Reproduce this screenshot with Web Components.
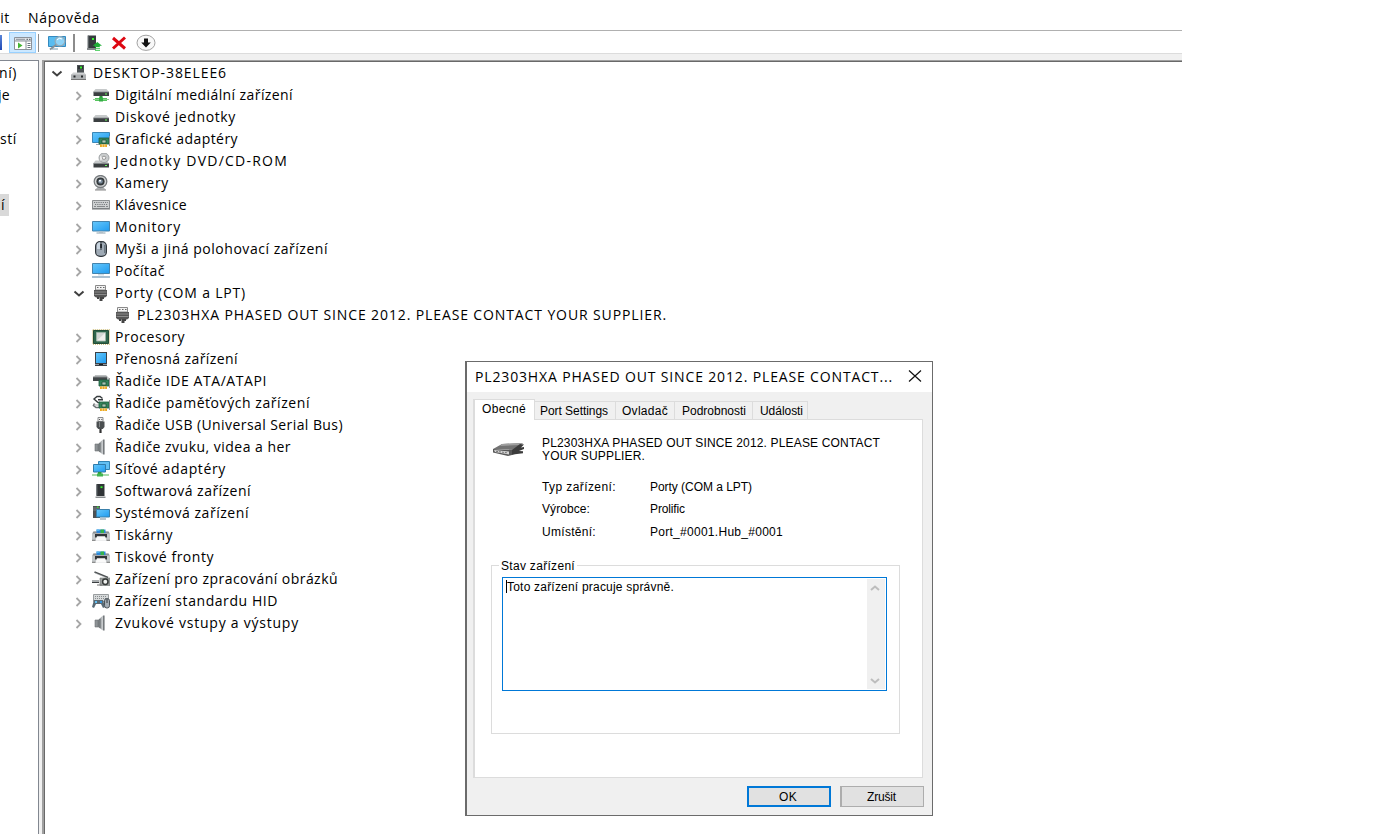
<!DOCTYPE html>
<html lang="cs">
<head>
<meta charset="utf-8">
<title>Správce zařízení</title>
<style>
  body {
    margin: 0;
    height: 834px;
    overflow: hidden;
    background: #fff;
    color: #000;
    font: 14px/22px "Open Sans", "Noto Sans", sans-serif;
  }
</style>
</head>
<body>
<device-manager></device-manager>

<script>
// Small helper: every component renders its markup into an open shadow root
class BaseElement extends HTMLElement {
  render(html) {
    const template = document.createElement('template');
    template.innerHTML = html;
    this.attachShadow({ mode: 'open' });
    this.shadowRoot.appendChild(template.content.cloneNode(true));
  }
}

// components/icons

const port = `
  <path d="M3.5 .5h10v4.5h-10z" fill="#f2f2f2" stroke="#8a8a8a"/>
  <path d="M5 2h1.5v1H5zM8 2h1.5v1H8zM11 2h1.5v1H11z" fill="#666"/>
  <path d="M2 5h13v6l-2 1.5H4L2 11z" fill="#555"/>
  <path d="M2.5 7h12M2.5 9.5h12" stroke="#8b8b8b"/>
  <path d="M5 12h2v2H5zM10 12h2v2h-2zM7.5 12h3v4h-3z" fill="#444"/>`;
const card = `
  <path d="M7 7h10v6H7z" fill="#34845b" stroke="#1d5b3c" stroke-width=".8"/>
  <path d="M10 9h4v3h-4z" fill="#a9c7b5" stroke="#17492f" stroke-width=".7"/>
  <path d="M17.5 5v10" stroke="#999"/>
  <path d="M8 13.4h7V16H8z" fill="#eda921"/><path d="M10.3 13.4V16M12.8 13.4V16" stroke="#fff" stroke-width=".5"/>`;
const drive = y => `
  <path d="M3.5 ${y}h11L17 ${y + 3}H1z" fill="#c6c9ca"/>
  <path d="M1.5 ${y + 3}h15.5v4H1.5z" fill="#3b3f41"/>
  <path d="M1.5 ${y + 3}h15.5" stroke="#83888a" stroke-width=".8"/>
  <path d="M13 ${y + 4.4}h2v1.2h-2z" fill="#6aff5c"/>`;
const speaker = `
  <path d="M3 5h3v7H3z" fill="#8e9396" stroke="#6b7073" stroke-width=".6"/>
  <path d="M6 5l5-4.5v15L6 12z" fill="url(#metal)"/>
  <path d="M11 .5h1.6v15H11z" fill="#75797c"/><path d="M8 4v9" stroke="#565b5e" stroke-width=".7"/>`;
const printer = `
  <path d="M1.5 4.5h15L18 6.5v7H0v-7z" fill="#c3c7c9"/>
  <path d="M1.5 4.5h15l1 2H.5z" fill="#8b9093"/>
  <path d="M4.5 2.5h9v3.5h-9z" fill="#2d86d8"/><path d="M8.5 2.5h3.5V6H8.5z" fill="#35b34a"/>
  <path d="M4.5 2.5h3V4h-3z" fill="#54b7ee"/>
  <path d="M3 7h12v3.5H3z" fill="#323639"/><path d="M5 9.3h8l1.5 4.2h-11z" fill="#fafafa"/>
  <path d="M0 13.3h3.5M14.5 13.3H18" stroke="#777"/>`;

const icons = {
  root: `<path d="M7 0h7v9H7z" fill="#4b5154"/><path d="M8 1h5v3H8z" fill="#2e3335"/>
    <path d="M10 1.5h2v2h-2z" fill="#35f02d"/>
    <path d="M3 7.5h11.5L16 10H1z" fill="#d0d2d3"/><path d="M1 9.5h15v5H1z" fill="#aeb1b3"/>
    <path d="M1 14.5h15" stroke="#777"/><path d="M3.5 10.5h2v2h-2zM11 10.5h2v2h-2z" fill="#25292b"/>`,
  media: drive(2) + `<path d="M7.5 9h3v3h-3z" fill="#2d9c3e"/>
    <path d="M3 11h12v3H3z" fill="#55c45e"/><path d="M1 12.5h16" stroke="#8bd18f"/><path d="M7 10.5h4v4H7z" fill="#35ad45"/>`,
  disk: drive(6),
  display: `<path d="M.5 1.5h17v10H.5z" fill="url(#screen)" stroke="#3b87b7"/><path d="M4 13.5h5" stroke="#9aa8b0"/>` + card,
  dvd: drive(7.5) + `<ellipse cx="12" cy="4.8" rx="5" ry="4.8" fill="#c9cccd" stroke="#8e9294" stroke-width=".8"/>
    <path d="M8 3l3 1.8L8.5 8z" fill="#f3f3f3"/>
    <ellipse cx="12" cy="4.8" rx="1.8" ry="1.6" fill="#f7f7f7" stroke="#888" stroke-width=".8"/>`,
  camera: `<path d="M6 12h5l3 2.8H3z" fill="#adb0b2"/><path d="M3 15h11" stroke="#888"/>
    <ellipse cx="8.5" cy="6.5" rx="6.3" ry="6" fill="#d5d7d8" stroke="#777b7e" stroke-width="1.3"/>
    <ellipse cx="8.5" cy="6.4" rx="4.1" ry="4" fill="#34393c"/><ellipse cx="8.5" cy="6.4" rx="2.3" ry="2.2" fill="#7b8c9c"/>
    <path d="M7 5h2v1.5H7z" fill="#f6f9ff"/>`,
  keyboard: `<path d="M.5 3.5h17v8H.5z" fill="#ced1d2" stroke="#8b8f91"/>
    <path d="M2 5.5h14M3 7.5h13" stroke="#777b7e" stroke-dasharray="1.2 1"/><path d="M2 9.5h2M5 9.5h8M14 9.5h2" stroke="#85898b"/>
    <path d="M0 12h18" stroke="#6e7274"/>`,
  monitor: `<path d="M.5 2.5h17v9.5H.5z" fill="url(#screen)" stroke="#4584ad"/>
    <path d="M7 12.5h4v1H7z" fill="#b5c1c8"/><path d="M4.5 14h9" stroke="#8da0ac"/>`,
  mouse: `<rect x="3.6" y=".6" width="10.8" height="14.8" rx="4.5" fill="#9faab5" stroke="#30363c" stroke-width="1.2"/>
    <path d="M5 4q0-2.5 3-2.8V8H5z" fill="#c9d5e0"/><path d="M9 1v8" stroke="#30363c"/><path d="M8.2 3h1.7v4H8.2z" fill="#1e242a"/>
    <path d="M12.8 4v8" stroke="#56616c"/>`,
  computer: `<path d="M.5 .5h17v10H.5z" fill="url(#screen)" stroke="#4584ad"/>
    <path d="M6 11h6v1.5H6z" fill="#cfdce4"/><path d="M0 14h18" stroke="#8eabc0" stroke-width="1.5"/>`,
  port,
  cpu: `<path d="M.8.8h16.4v14.4H.8z" fill="none" stroke="#c0ad5b" stroke-width="1.2" stroke-dasharray="1 1"/>
    <path d="M1.5 1.5h15v13h-15z" fill="#2f664b"/><path d="M1.5 1.5h15v13h-15z" fill="none" stroke="#234d38"/>
    <path d="M4.5 3.5h9v8.5h-9z" fill="#d3d6d3" stroke="#9bb3a5"/><path d="M5 11.5L13 4v7.5z" fill="#f0f0ec"/>`,
  portable: `<path d="M3 1h12v14H3z" fill="#3c4146"/><path d="M4 2h10v10H4z" fill="url(#screen)"/>
    <path d="M3 13.5h12" stroke="#939aa1"/><path d="M7 13.5h4" stroke="#1c2022"/>`,
  ide: `<path d="M3 2h11l3 3v3H2V5z" fill="#bcbfc0"/><path d="M1 4h14v4H1z" fill="#424749"/><path d="M1 4h14" stroke="#828688"/>` + card,
  storage: `<path d="M10.5 3.5L8 1.5H5L2 4l4 3.5h2M6 4.7h5" fill="none" stroke="#383d3f" stroke-width="1.4"/>
    <path d="M2.5 8.5l-1 2 2.5 2h4" fill="none" stroke="#6b7173" stroke-width="1.6"/><path d="M2 10h5" stroke="#a5a9ab"/>` + card,
  usb: `<path d="M6 .5h5v4H6z" fill="#eee" stroke="#8b8d8e"/><path d="M7 2h1v1H7zM9.3 2h1v1h-1z" fill="#555"/>
    <path d="M4.5 4.5h8V10L10.8 12H6.2L4.5 10z" fill="#4b4f51"/><path d="M7.5 5v5" stroke="#818587"/><path d="M7.4 12h2.2v4H7.4z" fill="#333"/>`,
  speaker,
  network: `<path d="M6.5.5h11v8h-11z" fill="#63c0f3" stroke="#3184b5"/>
    <path d="M1.5 3.5h12V11h-12z" fill="url(#screen)" stroke="#317baa"/><path d="M6 11h3.5v2H6z" fill="#2d9c3e"/>
    <path d="M0 14h17" stroke="#8bd18f" stroke-width="1.5"/><path d="M5 12.5h6v3H5z" fill="#43b551"/>`,
  software: `<path d="M4.5 1h8v12h-8z" fill="#303437"/><path d="M5 1.5v11" stroke="#596064"/>
    <path d="M8.5 3.3h2v1.8h-2z" fill="#37f52e"/><path d="M3.5 13.5h10V15h-10z" fill="#8c9092"/>`,
  system: `<path d="M1 1h7v12H1z" fill="#4c5255"/><path d="M1 3h7M1 5h7" stroke="#91979a" stroke-width=".7"/>
    <path d="M5 1.6h1.6v1.2H5z" fill="#3ceb34"/>
    <path d="M4.5 4.5h13V12h-13z" fill="url(#screen)" stroke="#3b80aa"/><path d="M8 14h6" stroke="#778b98"/>`,
  printer,
  imaging: `<path d="M2.5 1L16 6.5" stroke="#4b4f51" stroke-width="1.6"/><path d="M3 2l12 5" stroke="#b6babb" stroke-width=".5"/>
    <path d="M0 9h7v3H0z" fill="#a9adaf"/><path d="M0 11.5h7" stroke="#3c4042"/>
    <path d="M8 7h10v7.5H8z" fill="#9c9f9e" stroke="#717573" stroke-width=".6"/><path d="M5 14h5" stroke="#777"/>
    <ellipse cx="13.3" cy="10.8" rx="2.7" ry="2.7" fill="#f0f2f0" stroke="#353938" stroke-width="1.5"/>`,
  hid: `<path d="M1.5 1.5h15v7h-15z" fill="#d6d9da" stroke="#999d9f"/><path d="M3 3.5h12M3 5.5h12" stroke="#888c8e" stroke-dasharray="1 1"/>
    <path d="M2 7h9l2 7-2 1-2-4H4l-2 4-2-1z" fill="#596a75"/><path d="M3 8h2v2H3z" fill="#63bff2"/><path d="M8 8h2v2H8z" fill="#3594db"/>
    <rect x="12.5" y="5.5" width="5" height="9.5" rx="2.3" fill="#a4adb5" stroke="#4b5359"/><path d="M15 6v4" stroke="#33393d"/>`
};

class DmIcon extends BaseElement {
  connectedCallback() {
    this.render(`
      <style>
        :host { display: block; width: 18px; height: 16px; flex: none; }
        svg { display: block; }
      </style>
      <svg width="18" height="16" viewBox="0 0 18 16">
        <defs>
          <linearGradient id="screen" x1="0" y1="0" x2="1" y2="1">
            <stop offset="0" stop-color="#67c8fb"/><stop offset="1" stop-color="#1f9bf0"/>
          </linearGradient>
          <linearGradient id="metal">
            <stop offset="0" stop-color="#6c7174"/><stop offset="1" stop-color="#d2d5d7"/>
          </linearGradient>
        </defs>
        ${icons[this.getAttribute('name')]}
      </svg>`);
  }
}
customElements.define('dm-icon', DmIcon);

// A single line of text, tracked so that it takes up the given width
class FitText extends BaseElement {
  connectedCallback() {
    this.render(`
      <style>
        :host { display: block; white-space: nowrap; flex: none; }
        span { display: inline; }
      </style>
      <span><slot></slot></span>`);
    const width = Number(this.getAttribute('width'));
    const span = this.shadowRoot.querySelector('span');
    const natural = span.getBoundingClientRect().width;
    const count = this.textContent.length;
    span.style.letterSpacing = (width - natural) / count + 'px';
  }
}
customElements.define('fit-text', FitText);

// components/tree-row

class TreeRow extends BaseElement {
  connectedCallback() {
    const level = Number(this.getAttribute('level'));
    const state = this.getAttribute('state');
    const arrows = {
      open: '<path d="M1.5 5.5l4.5 4 4.5-4" stroke="#404040" stroke-width="2"/>',
      closed: '<path d="M3.5 4l4 4-4 4" stroke="#a6a6a6" stroke-width="1.8"/>',
      none: ''
    };
    this.render(`
      <style>
        :host { display: flex; align-items: center; height: 22px; padding-left: ${6 + level * 22}px; }
        .arrow { width: 12px; height: 14px; margin-right: 7px; fill: none; }
        dm-icon { margin-right: 5px; }
      </style>
      <svg class="arrow" viewBox="0 0 12 14">${arrows[state]}</svg>
      <dm-icon name="${this.getAttribute('icon')}"></dm-icon>
      <fit-text width="${this.getAttribute('width')}">${this.textContent}</fit-text>`);
  }
}
customElements.define('tree-row', TreeRow);

// level, state, icon, text width, text
const devices = [
  [0, 'open', 'root', 134, 'DESKTOP-38ELEE6'],
  [1, 'closed', 'media', 178, 'Digitální mediální zařízení'],
  [1, 'closed', 'disk', 121, 'Diskové jednotky'],
  [1, 'closed', 'display', 123, 'Grafické adaptéry'],
  [1, 'closed', 'dvd', 173, 'Jednotky DVD/CD-ROM'],
  [1, 'closed', 'camera', 54, 'Kamery'],
  [1, 'closed', 'keyboard', 72, 'Klávesnice'],
  [1, 'closed', 'monitor', 66, 'Monitory'],
  [1, 'closed', 'mouse', 213, 'Myši a jiná polohovací zařízení'],
  [1, 'closed', 'computer', 50, 'Počítač'],
  [1, 'open', 'port', 131, 'Porty (COM a LPT)'],
  [2, 'none', 'port', 530, 'PL2303HXA PHASED OUT SINCE 2012. PLEASE CONTACT YOUR SUPPLIER.'],
  [1, 'closed', 'cpu', 70, 'Procesory'],
  [1, 'closed', 'portable', 123, 'Přenosná zařízení'],
  [1, 'closed', 'ide', 152, 'Řadiče IDE ATA/ATAPI'],
  [1, 'closed', 'storage', 195, 'Řadiče paměťových zařízení'],
  [1, 'closed', 'usb', 228, 'Řadiče USB (Universal Serial Bus)'],
  [1, 'closed', 'speaker', 176, 'Řadiče zvuku, videa a her'],
  [1, 'closed', 'network', 111, 'Síťové adaptéry'],
  [1, 'closed', 'software', 136, 'Softwarová zařízení'],
  [1, 'closed', 'system', 134, 'Systémová zařízení'],
  [1, 'closed', 'printer', 58, 'Tiskárny'],
  [1, 'closed', 'printer', 99, 'Tiskové fronty'],
  [1, 'closed', 'imaging', 223, 'Zařízení pro zpracování obrázků'],
  [1, 'closed', 'hid', 163, 'Zařízení standardu HID'],
  [1, 'closed', 'speaker', 184, 'Zvukové vstupy a výstupy']
];

class DeviceTree extends BaseElement {
  connectedCallback() {
    this.render(`
      <style>
        :host { display: block; }
      </style>
      ${devices.map(([level, state, icon, width, text]) =>
        `<tree-row level="${level}" state="${state}" icon="${icon}" width="${width}">${text}</tree-row>`).join('')}`);
  }
}
customElements.define('device-tree', DeviceTree);

// components/menu-bar

class MenuBar extends BaseElement {
  connectedCallback() {
    this.render(`
      <style>
        :host { display: flex; height: 23px; padding-top: 7px; border-bottom: 1px solid #b0b0b0; }
        .cut { width: 10px; margin-right: 18px; display: flex; justify-content: flex-end; }
      </style>
      <div class="cut"><fit-text width="17">zit</fit-text></div>
      <fit-text width="72">Nápověda</fit-text>`);
  }
}
customElements.define('menu-bar', MenuBar);

// components/tool-bar

class ToolBar extends BaseElement {
  connectedCallback() {
    this.render(`
      <style>
        :host { display: flex; align-items: center; height: 23px; box-sizing: border-box; border-bottom: 1px solid #dcdcdc; padding-top: 1px; }
        svg { display: block; flex: none; }
        .edge { width: 2px; height: 15px; background: linear-gradient(#5a86d8, #1f48b4); margin-right: 7px; }
        .active { width: 27px; height: 21px; box-sizing: border-box; background: #cce8ff; border: 1px solid #99d1ff; padding: 4px 0 0 4px; }
        .separator { width: 1px; height: 18px; background: #8c8c8c; }
      </style>
      <div class="edge"></div>
      <div class="active">
        <svg width="18" height="14" viewBox="0 0 18 14">
          <path d="M.5.5h17v12H.5z" fill="#fff" stroke="#8b929a"/>
          <path d="M1 1h16v3H1z" fill="#dfe3e7"/><path d="M0 4h18" stroke="#8b929a"/>
          <path d="M2 2.3h9" stroke="#8b929a"/><path d="M12.5 2.3h1.5M15 2.3h1.5" stroke="#4f565d"/>
          <path d="M12 4v8.5" stroke="#8b929a"/><path d="M4 5.5l4.5 3-4.5 3z" fill="#43b533"/>
          <path d="M13.5 6.5h3M13.5 8.5h3M13.5 10.5h3" stroke="#68747f"/>
        </svg>
      </div>
      <div class="separator" style="margin: 0 9px 0 2px"></div>
      <svg width="19" height="16" viewBox="0 0 19 16">
        <path d="M.5 1.5h17v10H.5z" fill="#58bcf0" stroke="#3489bf"/>
        <path d="M4 14h6" stroke="#7d9caf"/>
        <path d="M8.5 9.5L2 14.5" stroke="#84919a" stroke-width="2"/>
        <ellipse cx="12" cy="6.2" rx="4.9" ry="4.6" fill="#8fd3f7" stroke="#94a9b6" stroke-width="1.2"/>
        <path d="M9 5q2-3 5-1" fill="none" stroke="#fff"/>
      </svg>
      <div class="separator" style="width: 2px; margin: 0 12px 0 6px"></div>
      <svg width="15" height="16" viewBox="0 0 15 16">
        <path d="M.8.5h8.2v13H.8z" fill="#363b3e"/><path d="M1.2.5v13" stroke="#6c7275"/>
        <path d="M5 3h2v2H5z" fill="#37f52e"/><path d="M0 13h9v2H0z" fill="#85898b"/>
        <path d="M10.3 7l4.7 3.8h-2.2V12H7.8v-1.2H5.7z" fill="#1fae36"/><path d="M8 13.3h5M8 15.3h5" stroke="#39c84e"/>
      </svg>
      <svg width="16" height="14" viewBox="0 0 16 14" style="margin-left: 9px">
        <path d="M2 2l12 10.5M14 1.5L2 12.5" stroke="#dd0712" stroke-width="3"/>
      </svg>
      <svg width="20" height="17" viewBox="0 0 20 17" style="margin-left: 9px">
        <ellipse cx="10" cy="8.8" rx="9" ry="7.6" fill="#f8f8f8" stroke="#a2a2a2"/>
        <path d="M8 4.5h4v4h2.8L10 13.5 5.2 8.5H8z" fill="#111"/>
      </svg>`);
  }
}
customElements.define('tool-bar', ToolBar);

// components/side-pane (scrolled out to the left, only the line ends are seen)

class SidePane extends BaseElement {
  connectedCallback() {
    this.render(`
      <style>
        :host { display: block; width: 38px; height: 780px; flex: none; border: solid #828790; border-width: 1px 1px 0 0; padding-top: 1px; }
        div { display: flex; justify-content: flex-end; height: 22px; }
        .selected { background: #d9d9d9; }
      </style>
      <div style="width: 17px"><fit-text width="18">ní)</fit-text></div>
      <div style="width: 10px"><fit-text width="12">je</fit-text></div>
      <div></div>
      <div style="width: 17px"><fit-text width="17">stí</fit-text></div>
      <div></div>
      <div></div>
      <div class="selected" style="width: 9px"><fit-text width="8">í</fit-text></div>`);
  }
}
customElements.define('side-pane', SidePane);

// components/push-button

class PushButton extends BaseElement {
  connectedCallback() {
    this.render(`
      <style>
        :host { display: block; }
        button {
          display: flex; align-items: center; justify-content: center;
          width: 84px; height: 21px; padding: 1px 2px 0 0; box-sizing: border-box;
          font: inherit; color: inherit; background: #e1e1e1;
          border: 1px solid #adadad; border-left-width: 2px;
        }
        :host([default]) button { border: 2px solid #0078d7; }
      </style>
      <button><slot></slot></button>`);
  }
}
customElements.define('push-button', PushButton);

// components/tab-strip

class TabStrip extends BaseElement {
  connectedCallback() {
    this.render(`
      <style>
        :host { display: flex; align-items: flex-end; height: 20px; }
        div {
          height: 18px; box-sizing: border-box; border: 1px solid #dcdcdc;
          border-width: 1px 1px 0 0; line-height: 19px; background: #f0f0f0;
        }
        .current {
          height: 21px; margin-bottom: -1px; background: #fff; border-left-width: 2px;
          width: 62px; padding-left: 7px; line-height: 18px; position: relative;
        }
      </style>
      <div class="current"><fit-text width="44">Obecné</fit-text></div>
      <div style="width: 81px; padding-left: 5px"><fit-text width="68">Port Settings</fit-text></div>
      <div style="width: 59px; padding-left: 6px"><fit-text width="46">Ovladač</fit-text></div>
      <div style="width: 78px; padding-left: 7px"><fit-text width="64">Podrobnosti</fit-text></div>
      <div style="width: 55px; padding-left: 7px"><fit-text width="43">Události</fit-text></div>`);
  }
}
customElements.define('tab-strip', TabStrip);

// components/group-box

class GroupBox extends BaseElement {
  connectedCallback() {
    this.render(`
      <style>
        :host { display: block; box-sizing: border-box; width: 409px; height: 169px; border: 1px solid #dcdcdc; }
        .label { display: block; width: 78px; height: 14px; line-height: 16px; margin: -8px 0 0 7px; padding-left: 2px; box-sizing: border-box; background: #fff; }
      </style>
      <div class="label"><fit-text width="74">${this.getAttribute('label')}</fit-text></div>
      <slot></slot>`);
  }
}
customElements.define('group-box', GroupBox);

// components/status-field

class StatusField extends BaseElement {
  connectedCallback() {
    this.render(`
      <style>
        :host { display: flex; justify-content: space-between; box-sizing: border-box; width: 385px; height: 114px; margin: 5px 0 0 10px; border: 1px solid #0078d7; padding: 1px 1px 1px 3px; }
        .text { display: flex; height: 13px; margin-top: 1px; border-left: 1px solid #000; line-height: 15px; }
        .scroll { width: 18px; background: #f0f0f0; display: flex; flex-direction: column; justify-content: space-between; align-items: center; padding: 5px 2px 4px 0; box-sizing: border-box; }
        svg { display: block; fill: none; stroke: #bdbdbd; stroke-width: 2; }
      </style>
      <div class="text"><slot></slot></div>
      <div class="scroll">
        <svg width="10" height="8" viewBox="0 0 10 8"><path d="M1 6l4-3.5L9 6"/></svg>
        <svg width="10" height="8" viewBox="0 0 10 8"><path d="M1 2l4 3.5L9 2"/></svg>
      </div>`);
  }
}
customElements.define('status-field', StatusField);

// components/properties-dialog

class PropertiesDialog extends BaseElement {
  connectedCallback() {
    this.render(`
      <style>
        :host {
          display: block; position: absolute; left: 465px; top: 361px;
          width: 468px; height: 455px; box-sizing: border-box;
          border: 1px solid #6b6b6b; border-left-width: 2px; background: #f0f0f0;
        }
        .title { display: flex; height: 30px; line-height: 30px; padding: 0 10px 0 8px; background: #fff; justify-content: space-between; align-items: center; }
        .title svg { margin-top: -2px; flex: none; }
        .body { font: 12px/13px "Liberation Sans", Arial, sans-serif; padding: 7px 8px 0 6px; }
        .page { height: 359px; box-sizing: border-box; border: 1px solid #dcdcdc; border-left-width: 2px; background: #fff; padding: 16px 0 0 16px; width: 450px; }
        .device { display: flex; gap: 17px; padding-left: 1px; }
        .device svg { margin-top: 5px; }
        .name { display: flex; flex-direction: column; padding-top: 1px; }
        .facts { display: grid; grid-template-columns: 108px auto; grid-template-rows: 22px 22px 23px; align-items: center; margin: 13px 0 22px 51px; }
        .facts .last { padding-top: 1px; }
        .buttons { display: flex; justify-content: flex-end; gap: 9px; margin-top: 8px; }
      </style>
      <div class="title">
        <fit-text width="418">PL2303HXA PHASED OUT SINCE 2012. PLEASE CONTACT...</fit-text>
        <svg width="14" height="12" viewBox="0 0 14 12"><path d="M1 .5l12 11M13 .5l-12 11" stroke="#111" stroke-width="1.2"/></svg>
      </div>
      <div class="body">
        <tab-strip></tab-strip>
        <div class="page">
          <div class="device">
            <svg width="33" height="17" viewBox="0 0 33 17">
              <path d="M1 8L10 3l21-1-9 7z" fill="#737373"/>
              <path d="M10 3l21-1-3 2-20 1z" fill="#a0a0a0"/>
              <path d="M1 8l19 1v5l-4 1-15-3.5z" fill="#575757"/>
              <path d="M2 9l15 1.5v3L3 11z" fill="#d5d5d5"/><path d="M4 10.3l11 1.5" stroke="#777" stroke-dasharray="2 1"/>
              <path d="M20 9l8-6 4 .5-3 3 3-.5v2l-5 2 4 .3v2l-8 1-3 .7z" fill="#3c3c3c"/>
            </svg>
            <div class="name">
              <fit-text width="338">PL2303HXA PHASED OUT SINCE 2012. PLEASE CONTACT</fit-text>
              <fit-text width="103">YOUR SUPPLIER.</fit-text>
            </div>
          </div>
          <div class="facts">
            <fit-text width="74">Typ zařízení:</fit-text><fit-text width="102">Porty (COM a LPT)</fit-text>
            <fit-text width="48">Výrobce:</fit-text><fit-text width="35">Prolific</fit-text>
            <fit-text class="last" width="54">Umístění:</fit-text><fit-text class="last" width="133">Port_#0001.Hub_#0001</fit-text>
          </div>
          <group-box label="Stav zařízení">
            <status-field><fit-text width="167">Toto zařízení pracuje správně.</fit-text></status-field>
          </group-box>
        </div>
        <div class="buttons">
          <push-button default><fit-text width="18">OK</fit-text></push-button>
          <push-button><fit-text width="29">Zrušit</fit-text></push-button>
        </div>
      </div>`);
  }
}
customElements.define('properties-dialog', PropertiesDialog);

// The window itself

class DeviceManager extends BaseElement {
  connectedCallback() {
    this.render(`
      <style>
        :host { display: block; width: 1182px; }
        .gap { height: 6px; background: #f0f0f0; }
        .panes { display: flex; background: #f0f0f0; height: 774px; overflow: hidden; }
        .main { flex: 1; margin-left: 3px; background: #fff; border: solid #a0a0a0; border-width: 1px 0 0 2px; }
        device-tree { border: solid #696969; border-width: 1px 0 0 1px; height: 780px; }
        side-pane { background: #fff; }
      </style>
      <menu-bar></menu-bar>
      <tool-bar></tool-bar>
      <div class="gap"></div>
      <div class="panes">
        <side-pane></side-pane>
        <div class="main"><device-tree></device-tree></div>
      </div>
      <properties-dialog></properties-dialog>`);
  }
}
customElements.define('device-manager', DeviceManager);
</script>
</body>
</html>
